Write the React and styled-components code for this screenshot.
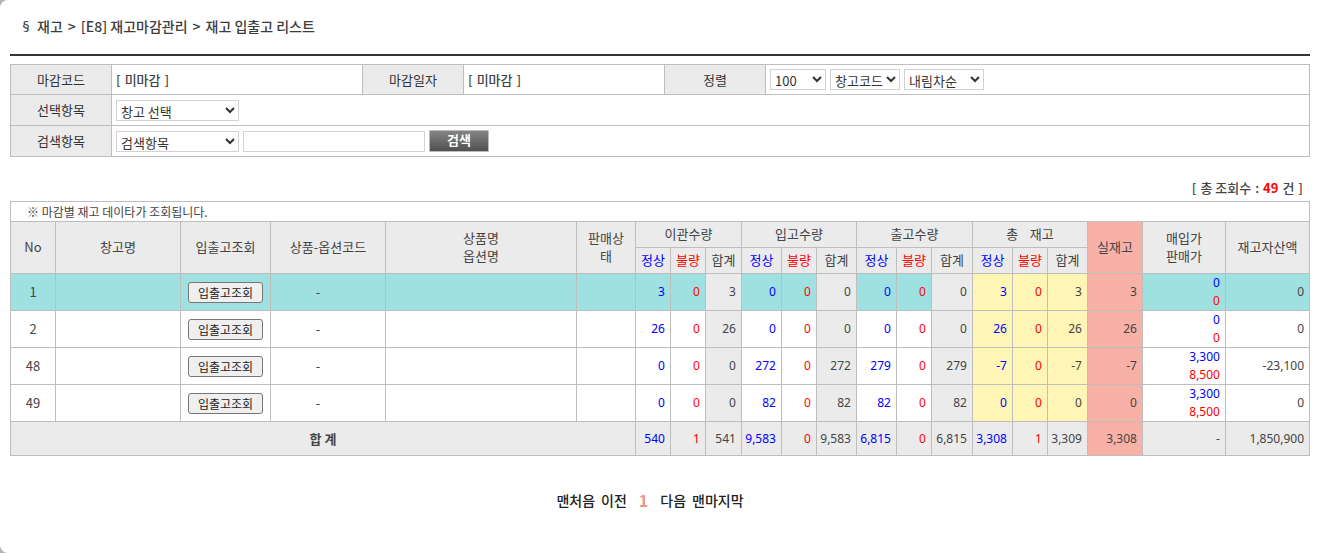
import React from "react";
import styled, { createGlobalStyle } from "styled-components";

const Global = createGlobalStyle`
  * { box-sizing: border-box; }
  body {
    margin: 0;
    background: #b4b4b4;
    color: #444;
    font: 13px/18px "Noto Sans CJK KR", sans-serif;
  }
  button, input, select { font-family: inherit; }
`;

const Page = styled.main`
  min-height: 100vh;
  padding: 0 23px 32px 10px;
  background: #fff;
  border-radius: 8px 0 0 8px;
`;

const Title = styled.h1`
  display: flex;
  align-items: center;
  gap: 5px;
  height: 56px;
  margin: 0 0 8px;
  padding: 0 0 2px 10px;
  border-bottom: 2px solid #353535;
  font-size: 14px;
  font-weight: 500;
  line-height: 20px;
  color: #3c3c3c;
`;

const TitleMark = styled.span`
  font-size: 12px;
`;

const GridTable = styled.table`
  width: 100%;
  border-collapse: collapse;
  table-layout: fixed;
  th, td { border: 1px solid #bebebe; }
`;

const FilterRow = styled.tr`
  height: ${(p) => p.$height || 31}px;
`;

const FilterLabel = styled.th`
  padding: 0;
  background: #ebebeb;
  font-weight: 400;
  color: #333;
`;

const FilterCell = styled.td`
  padding: 0 4px;
`;

const Bracketed = styled.span`
  display: inline-flex;
  gap: 4px;
  font-weight: 500;
  &::before { content: "["; }
  &::after { content: "]"; }
`;

const Controls = styled.div`
  display: flex;
  align-items: center;
  gap: 4px;
`;

const Select = styled.select`
  width: ${(p) => p.$width}px;
  height: 21px;
  padding: 0;
  border: 1px solid #d2d2d2;
  background-color: #fff;
  color: #333;
  font-size: 13px;
`;

const SearchInput = styled.input`
  width: 182px;
  height: 21px;
  border: 1px solid #d2d2d2;
  font-size: 13px;
`;

const SearchButton = styled.button`
  width: 60px;
  height: 22px;
  padding: 0 0 2px;
  border: 1px solid #bbb;
  border-radius: 1px;
  background: linear-gradient(#858585, #505050);
  color: #fff;
  font-size: 13px;
  font-weight: 700;
  line-height: 18px;
`;

const Count = styled.p`
  margin: 22px 0 4px;
  padding-right: 7px;
  text-align: right;
  line-height: 18px;
  strong { color: #f00; font-weight: 700; }
`;

const Note = styled.td`
  height: 20px;
  padding: 0 16px;
  font-size: 12px;
  line-height: 18px;
`;

const TONES = { blue: "#00f", red: "#f00" };
const FILLS = { head: "#ebebeb", yellow: "#fff5b4", pink: "#f8b1a6" };

const HeadCell = styled.th`
  height: ${(p) => (p.rowSpan ? 52 : 26)}px;
  padding: 0 ${(p) => (p.$narrow ? 8 : 0)}px 2px;
  background: ${(p) => FILLS[p.$fill || "head"]};
  color: ${(p) => TONES[p.$tone] || "inherit"};
  font-weight: 400;
  white-space: pre-line;
  word-break: break-all;
`;

const DataRow = styled.tr`
  height: 37px;
  background: ${(p) => (p.$active ? "#9fe1e0" : "#fff")};
`;

const TotalRow = styled.tr`
  height: 34px;
  background: #ebebeb;
`;

const Cell = styled.td`
  padding: 0;
  text-align: center;
  font-weight: ${(p) => (p.$strong ? 700 : 400)};
`;

const CodeCell = styled(Cell)`
  padding-right: 20px;
`;

const NumberCell = styled.td`
  padding: 0 5px 0 0;
  text-align: right;
  white-space: nowrap;
  font-family: "Noto Sans", "Noto Sans CJK KR", sans-serif;
  font-size: 12px;
  background: ${(p) => FILLS[p.$fill] || "transparent"};
  color: ${(p) => TONES[p.$tone] || "inherit"};
`;

const Price = styled.span`
  display: block;
  color: ${(p) => TONES[p.$tone]};
`;

const DetailButton = styled.button`
  width: 75px;
  height: 21px;
  padding: 0;
  border: 1px solid #767676;
  border-radius: 3px;
  background: #efefef;
  color: #222;
  font-size: 12px;
  line-height: 17px;
`;

const Pager = styled.nav`
  display: flex;
  justify-content: center;
  align-items: center;
  gap: 6px;
  margin-top: 34px;
  padding-right: 20px;
  font-size: 14px;
  font-weight: 500;
  line-height: 20px;
`;

const PageLink = styled.a`
  color: #222;
  text-decoration: none;
`;

const CurrentPage = styled.strong`
  padding: 0 6px;
  color: #f0958c;
  font-size: 16px;
  font-weight: 700;
`;

const COLUMN_WIDTHS = [45, 125, 90, 115, null, 59, 35, 35, 36, 40, 35, 40, 40, 35, 41, 40, 35, 40, 55, 83, 84];
const GROUPS = ["이관수량", "입고수량", "출고수량", "총\u00a0\u00a0\u00a0\u00a0재고"];

const ROWS = [
  { no: 1, active: true, qty: ["3", "0", "3", "0", "0", "0", "0", "0", "0", "3", "0", "3"], real: "3", buy: "0", sell: "0", asset: "0" },
  { no: 2, qty: ["26", "0", "26", "0", "0", "0", "0", "0", "0", "26", "0", "26"], real: "26", buy: "0", sell: "0", asset: "0" },
  { no: 48, qty: ["0", "0", "0", "272", "0", "272", "279", "0", "279", "-7", "0", "-7"], real: "-7", buy: "3,300", sell: "8,500", asset: "-23,100" },
  { no: 49, qty: ["0", "0", "0", "82", "0", "82", "82", "0", "82", "0", "0", "0"], real: "0", buy: "3,300", sell: "8,500", asset: "0" },
];
const TOTALS = ["540", "1", "541", "9,583", "0", "9,583", "6,815", "0", "6,815", "3,308", "1", "3,309"];

const toneOf = (i) => ["blue", "red", undefined][i % 3];
const fillOf = (i) => (i >= 9 ? "yellow" : i % 3 === 2 ? "head" : undefined);

function Filters() {
  return (
    <GridTable>
      <colgroup>
        <col style={{ width: 101 }} />
        <col style={{ width: 251 }} />
        <col style={{ width: 101 }} />
        <col style={{ width: 201 }} />
        <col style={{ width: 101 }} />
        <col />
      </colgroup>
      <tbody>
        <FilterRow $height={30}>
          <FilterLabel scope="row">마감코드</FilterLabel>
          <FilterCell><Bracketed>미마감</Bracketed></FilterCell>
          <FilterLabel scope="row">마감일자</FilterLabel>
          <FilterCell><Bracketed>미마감</Bracketed></FilterCell>
          <FilterLabel scope="row">정렬</FilterLabel>
          <FilterCell>
            <Controls>
              <Select $width={56} aria-label="정렬 개수"><option>100</option></Select>
              <Select $width={70} aria-label="정렬 기준"><option>창고코드</option></Select>
              <Select $width={80} aria-label="정렬 순서"><option>내림차순</option></Select>
            </Controls>
          </FilterCell>
        </FilterRow>
        <FilterRow>
          <FilterLabel scope="row"><label htmlFor="warehouse">선택항목</label></FilterLabel>
          <FilterCell colSpan={5}>
            <Controls>
              <Select id="warehouse" $width={123}><option>창고 선택</option></Select>
            </Controls>
          </FilterCell>
        </FilterRow>
        <FilterRow>
          <FilterLabel scope="row"><label htmlFor="field">검색항목</label></FilterLabel>
          <FilterCell colSpan={5}>
            <Controls>
              <Select id="field" $width={123}><option>검색항목</option></Select>
              <SearchInput type="text" aria-label="검색어" />
              <SearchButton type="button">검색</SearchButton>
            </Controls>
          </FilterCell>
        </FilterRow>
      </tbody>
    </GridTable>
  );
}

function StockTable() {
  return (
    <GridTable>
      <colgroup>
        {COLUMN_WIDTHS.map((w, i) => (
          <col key={i} style={w ? { width: w } : undefined} />
        ))}
      </colgroup>
      <thead>
        <tr><Note colSpan={21}>※ 마감별 재고 데이타가 조회됩니다.</Note></tr>
        <tr>
          <HeadCell rowSpan={2}>No</HeadCell>
          <HeadCell rowSpan={2}>창고명</HeadCell>
          <HeadCell rowSpan={2}>입출고조회</HeadCell>
          <HeadCell rowSpan={2}>상품-옵션코드</HeadCell>
          <HeadCell rowSpan={2}>{"상품명\n옵션명"}</HeadCell>
          <HeadCell rowSpan={2} $narrow>판매상태</HeadCell>
          {GROUPS.map((g) => <HeadCell key={g} colSpan={3}>{g}</HeadCell>)}
          <HeadCell rowSpan={2} $fill="pink">실재고</HeadCell>
          <HeadCell rowSpan={2}>{"매입가\n판매가"}</HeadCell>
          <HeadCell rowSpan={2}>재고자산액</HeadCell>
        </tr>
        <tr>
          {TOTALS.map((_, i) => (
            <HeadCell key={i} $tone={toneOf(i)}>{["정상", "불량", "합계"][i % 3]}</HeadCell>
          ))}
        </tr>
      </thead>
      <tbody>
        {ROWS.map((r) => (
          <DataRow key={r.no} $active={r.active}>
            <Cell>{r.no}</Cell>
            <Cell />
            <Cell><DetailButton type="button">입출고조회</DetailButton></Cell>
            <CodeCell>-</CodeCell>
            <Cell />
            <Cell />
            {r.qty.map((q, i) => (
              <NumberCell key={i} $tone={toneOf(i)} $fill={fillOf(i)}>{q}</NumberCell>
            ))}
            <NumberCell $fill="pink">{r.real}</NumberCell>
            <NumberCell>
              <Price $tone="blue">{r.buy}</Price>
              <Price $tone="red">{r.sell}</Price>
            </NumberCell>
            <NumberCell>{r.asset}</NumberCell>
          </DataRow>
        ))}
        <TotalRow>
          <Cell colSpan={6} $strong>합 계</Cell>
          {TOTALS.map((q, i) => <NumberCell key={i} $tone={toneOf(i)}>{q}</NumberCell>)}
          <NumberCell $fill="pink">3,308</NumberCell>
          <NumberCell>-</NumberCell>
          <NumberCell>1,850,900</NumberCell>
        </TotalRow>
      </tbody>
    </GridTable>
  );
}

export default function App() {
  return (
    <>
      <Global />
      <Page>
        <Title>
          <TitleMark>§</TitleMark>
          <span>재고</span>
          <span>&gt;</span>
          <span>[E8] 재고마감관리</span>
          <span>&gt;</span>
          <span>재고 입출고 리스트</span>
        </Title>
        <Filters />
        <Count>
          <Bracketed>
            <span>총 조회수</span>
            <span>:</span>
            <strong>49</strong>
            <span>건</span>
          </Bracketed>
        </Count>
        <StockTable />
        <Pager aria-label="페이지">
          <PageLink href="#first">맨처음</PageLink>
          <PageLink href="#prev">이전</PageLink>
          <CurrentPage>1</CurrentPage>
          <PageLink href="#next">다음</PageLink>
          <PageLink href="#last">맨마지막</PageLink>
        </Pager>
      </Page>
    </>
  );
}
